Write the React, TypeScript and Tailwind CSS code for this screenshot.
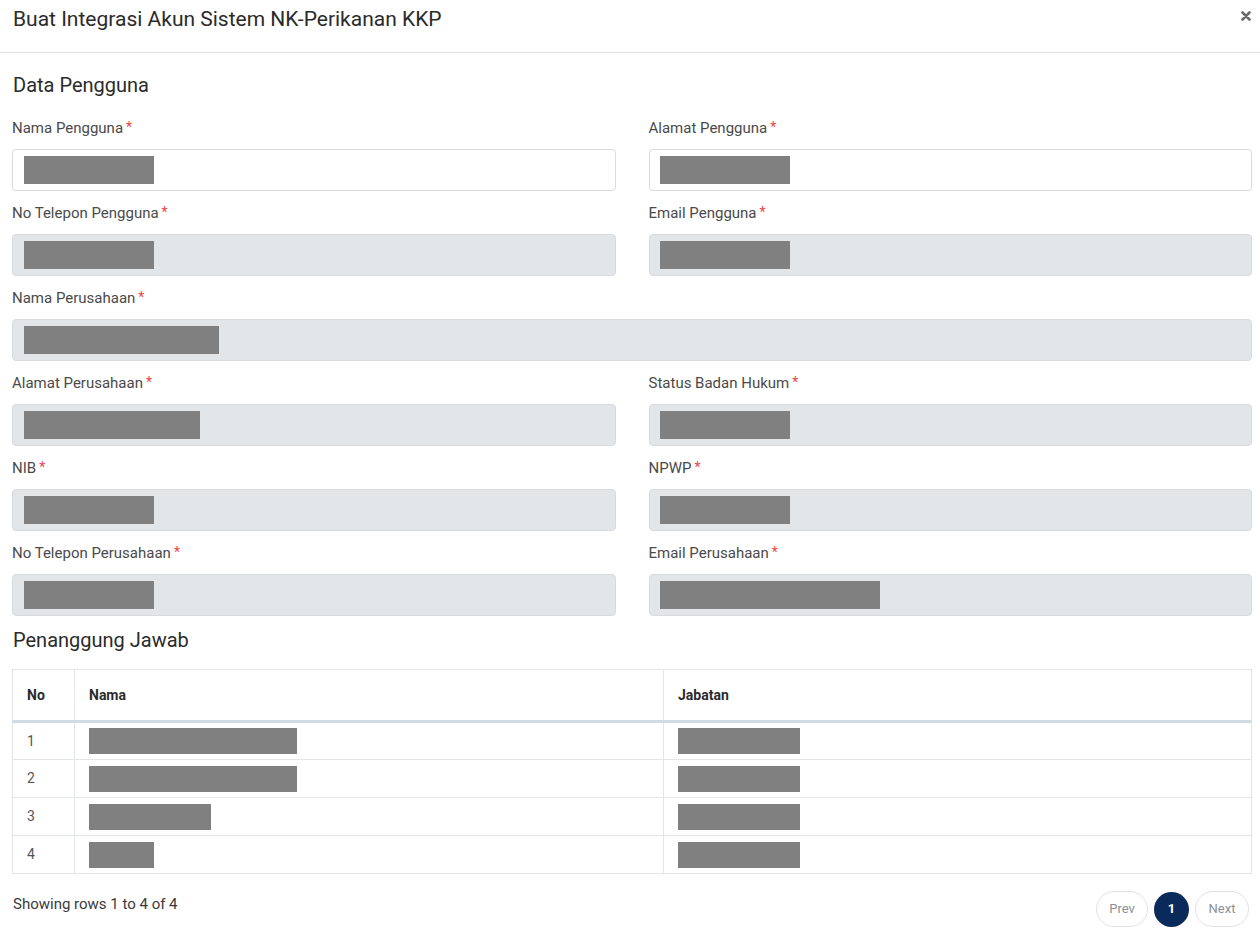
import React from "react";

type Field = { label: string; bar: number; white?: boolean; full?: boolean };

const rows: Field[][] = [
  [
    { label: "Nama Pengguna", bar: 130, white: true },
    { label: "Alamat Pengguna", bar: 130, white: true },
  ],
  [
    { label: "No Telepon Pengguna", bar: 130 },
    { label: "Email Pengguna", bar: 130 },
  ],
  [{ label: "Nama Perusahaan", bar: 195, full: true }],
  [
    { label: "Alamat Perusahaan", bar: 176 },
    { label: "Status Badan Hukum", bar: 130 },
  ],
  [
    { label: "NIB", bar: 130 },
    { label: "NPWP", bar: 130 },
  ],
  [
    { label: "No Telepon Perusahaan", bar: 130 },
    { label: "Email Perusahaan", bar: 220 },
  ],
];

const people = [
  { no: 1, nama: 208, jabatan: 122 },
  { no: 2, nama: 208, jabatan: 122 },
  { no: 3, nama: 122, jabatan: 122 },
  { no: 4, nama: 65, jabatan: 122 },
];

function FormField({ field }: { field: Field }) {
  return (
    <div className={field.full ? "col-span-2" : ""}>
      <label className="h-[21px] mb-[10px] flex items-center text-[15px] text-[#4a4a4a]">
        {field.label}
        <span className="text-[#ef4444] ml-[3px] text-[14px] leading-none -mt-[4px]">*</span>
      </label>
      <div
        className={
          "h-[42px] rounded-[4px] border flex items-center px-[10.5px] " +
          (field.white ? "bg-white border-[#d9dcdf]" : "bg-[#e3e6e9] border-[#d8dbde]")
        }
      >
        <div className="h-[28px] bg-[#808080]" style={{ width: field.bar }} />
      </div>
    </div>
  );
}

export default function App() {
  return (
    <div className="w-[1260px] h-[928px] bg-white text-[#2b2b2b] overflow-hidden" style={{ fontFamily: "Roboto, 'Noto Sans', sans-serif" }}>
      {/* --------------------------- Header --------------------------- */}
      <div className="h-[53px] border-b border-[#dfe2e6] flex items-start justify-between pl-[13px] pr-[9px]">
        <h1 className="mt-[5px] text-[21px] leading-[28px] text-[#2b2b2b]">Buat Integrasi Akun Sistem NK-Perikanan KKP</h1>
        <button className="mt-[11px] text-[#666]">
          <svg width="10" height="10" viewBox="0 0 10 10">
            <path d="M1.5 1.5 L8.5 8.5 M8.5 1.5 L1.5 8.5" stroke="#6b6b6b" strokeWidth="2.6" strokeLinecap="round" />
          </svg>
        </button>
      </div>

      <div className="px-[12px] pr-[8px]">
        {/* --------------------------- Data Pengguna --------------------------- */}
        <h2 className="mt-[18px] text-[20px] leading-[28px] text-[#2b2b2b] pl-[1px]">Data Pengguna</h2>
        <div className="mt-[19px] grid grid-cols-2 gap-x-[33px] gap-y-[12px]">
          {rows.map((row) => row.map((f) => <FormField key={f.label} field={f} />))}
        </div>

        {/* --------------------------- Penanggung Jawab --------------------------- */}
        <h2 className="mt-[10px] text-[20px] leading-[28px] text-[#2b2b2b] pl-[1px]">Penanggung Jawab</h2>
        <table className="mt-[15px] w-full border border-[#e3e6e9] border-collapse text-[14px]">
          <thead>
            <tr className="h-[52px] border-b-[3px] border-[#d3dbe2]">
              <th className="w-[62px] text-left font-bold text-[14px] pl-[14px] border-r border-[#e3e6e9]">No</th>
              <th className="text-left font-bold text-[14px] pl-[14px] border-r border-[#e3e6e9]">Nama</th>
              <th className="w-[588px] text-left font-bold text-[14px] pl-[14px]">Jabatan</th>
            </tr>
          </thead>
          <tbody>
            {people.map((p) => (
              <tr key={p.no} className="h-[38px] border-b border-[#e3e6e9]">
                <td className="pl-[14px] text-[#555] border-r border-[#e3e6e9]">{p.no}</td>
                <td className="pl-[14px] border-r border-[#e3e6e9]">
                  <div className="h-[26px] bg-[#808080]" style={{ width: p.nama }} />
                </td>
                <td className="pl-[14px]">
                  <div className="h-[26px] bg-[#808080]" style={{ width: p.jabatan }} />
                </td>
              </tr>
            ))}
          </tbody>
        </table>

        {/* --------------------------- Footer --------------------------- */}
        <div className="mt-[17px] flex items-center justify-between">
          <span className="text-[15px] text-[#3a3a3a] pl-[1px] -mt-[10px]">Showing rows 1 to 4 of 4</span>
          <div className="flex items-center gap-[6px] pr-[3px]">
            <button className="h-[36px] w-[52px] rounded-full border border-[#dfe2e6] text-[13px] text-[#8a8f96]">Prev</button>
            <button className="h-[35px] w-[35px] rounded-full bg-[#0b2a5c] text-white text-[13px] font-bold">1</button>
            <button className="h-[36px] w-[54px] rounded-full border border-[#dfe2e6] text-[13px] text-[#8a8f96]">Next</button>
          </div>
        </div>
      </div>
    </div>
  );
}
